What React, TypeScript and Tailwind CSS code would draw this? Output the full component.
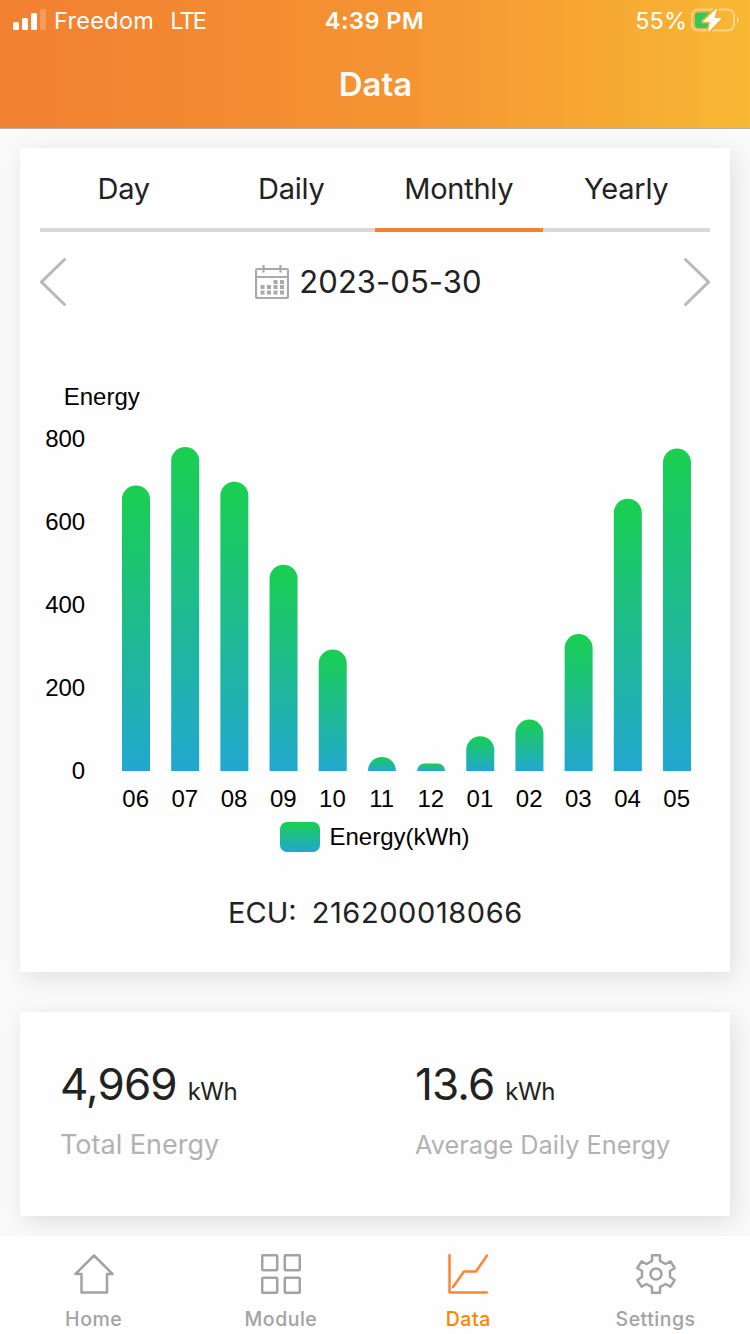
import React, { useState } from 'react';

const TABS = ['Day', 'Daily', 'Monthly', 'Yearly'] as const;

const MONTHS: { label: string; kwh: number }[] = [
  { label: '06', kwh: 688 },
  { label: '07', kwh: 781 },
  { label: '08', kwh: 697 },
  { label: '09', kwh: 497 },
  { label: '10', kwh: 293 },
  { label: '11', kwh: 34 },
  { label: '12', kwh: 18 },
  { label: '01', kwh: 84 },
  { label: '02', kwh: 124 },
  { label: '03', kwh: 330 },
  { label: '04', kwh: 656 },
  { label: '05', kwh: 777 },
];

const TICKS = [800, 600, 400, 200, 0];

const BASE_Y = 411;
const PX_PER_KWH = 0.415;
const BAR_W = 28;
const BAR_STEP = 49.18;

const barPath = (x: number, h: number) => {
  const r = Math.min(BAR_W / 2, h);
  const top = BASE_Y - h;
  return `M${x} ${BASE_Y}V${top + r}a${r} ${r} 0 0 1 ${r} ${-r}h${BAR_W - 2 * r}a${r} ${r} 0 0 1 ${r} ${r}V${BASE_Y}Z`;
};

const StatusBar: React.FC = () => (
  <div className="grid h-10 grid-cols-3 items-center pr-[10px] pl-[13px] text-[23.5px] text-white">
    <div className="flex items-center">
      <svg width="33" height="22" viewBox="0 0 33 22" fill="white" className="-mt-0.5">
        <rect x="0" y="14" width="6" height="8" rx="1.6" />
        <rect x="9" y="10" width="6" height="12" rx="1.6" />
        <rect x="18" y="5" width="6" height="17" rx="1.6" />
        <rect x="27" y="1" width="6" height="21" rx="1.6" opacity="0.22" />
      </svg>
      <span className="mt-0.5 ml-2 tracking-[0.3px]">Freedom</span>
      <span className="mt-0.5 ml-4 tracking-[-1.8px]">LTE</span>
    </div>
    <div className="mt-0.5 pr-1 text-center font-semibold tracking-[0.5px]">4:39 PM</div>
    <div className="flex items-center justify-end">
      <span className="mt-0.5 mr-[4px]">55%</span>
      <svg width="49" height="26" viewBox="0 0 49 26">
        <rect x="1" y="2.5" width="42" height="21" rx="6" fill="none" stroke="white" strokeOpacity="0.42" strokeWidth="2" />
        <path d="M46 10v6c2.6-.6 2.6-5.4 0-6z" fill="white" fillOpacity="0.5" />
        <rect x="4" y="5.5" width="20" height="15.5" rx="3.5" fill="#34c759" />
        <path d="M25.5 2 12.5 14.5h7L17.5 24.5 30 11.5h-7L25.5 2Z" fill="#f7af33" stroke="#f7af33" strokeWidth="4" strokeLinejoin="round" />
        <path d="M25.5 2 12.5 14.5h7L17.5 24.5 30 11.5h-7L25.5 2Z" fill="white" stroke="white" strokeWidth="0.8" strokeLinejoin="round" />
      </svg>
    </div>
  </div>
);

const CalendarIcon: React.FC = () => (
  <svg width="34" height="34" viewBox="0 0 34 34" fill="none" stroke="#a9a9a9" strokeWidth="2.2">
    <rect x="1" y="4" width="32" height="29" rx="1.5" />
    <path d="M1 12h32M8.5 0v7.5M25.5 0v7.5" />
    <path d="M18.5 17h4M25 17h4M5.5 22h4M12 22h4M18.5 22h4M25 22h4M5.5 27.5h4M12 27.5h4M18.5 27.5h4M25 27.5h4" strokeWidth="4" />
  </svg>
);

const EnergyChart: React.FC = () => (
  <svg width="670" height="500" viewBox="0 0 670 500" className="block font-['Liberation_Sans',sans-serif] text-[24px]">
    <defs>
      <linearGradient id="energy" x1="0" y1="0" x2="0" y2="1">
        <stop offset="0" stopColor="#19cf4f" />
        <stop offset="1" stopColor="#22a7d0" />
      </linearGradient>
    </defs>
    <text x="23.7" y="44.5">Energy</text>
    {TICKS.map((t) => (
      <text key={t} x="45.2" y={BASE_Y - t * PX_PER_KWH + 8} textAnchor="end">{t}</text>
    ))}
    {MONTHS.map((m, i) => (
      <g key={m.label}>
        <path d={barPath(82 + i * BAR_STEP, m.kwh * PX_PER_KWH)} fill="url(#energy)" />
        <text x={95.7 + i * BAR_STEP} y="447" textAnchor="middle">{m.label}</text>
      </g>
    ))}
    <rect x="240" y="462" width="40" height="30" rx="7" fill="url(#energy)" />
    <text x="289.5" y="485">Energy(kWh)</text>
  </svg>
);

const Stat: React.FC<{ value: string; label: string; compact?: boolean }> = ({ value, label, compact }) => (
  <div className="w-[355px] shrink-0">
    <div className="flex h-[60px] items-baseline text-[#222]">
      <span className="text-[44px] leading-[60px] tracking-[-0.9px]">{value}</span>
      <span className="ml-[11px] text-[24px] tracking-[-0.5px]">kWh</span>
    </div>
    <div className={`mt-[13px] leading-9 text-[#b3b1b2] ${compact ? 'text-[25.3px]' : 'text-[27px]'}`}>{label}</div>
  </div>
);

const NAV: { label: string; icon: React.ReactNode }[] = [
  { label: 'Home', icon: <path d="M20 1.5 38.5 20H33v18.5H7.5V20H1.5Z" /> },
  {
    label: 'Module',
    icon: (
      <>
        <rect x="1.2" y="1.2" width="15" height="15" rx="1" />
        <rect x="23.8" y="1.2" width="15" height="15" rx="1" />
        <rect x="1.2" y="23.8" width="15" height="15" rx="1" />
        <rect x="23.8" y="23.8" width="15" height="15" rx="1" />
      </>
    ),
  },
  { label: 'Data', icon: <path d="M1.5 1v37.5H39M5 33 16 17.5h12L39 1.5" strokeLinecap="round" /> },
  {
    label: 'Settings',
    icon: (
      <>
        <path d="M16 1.3h8v5.5l5.5 3.2L34.5 7.300 38.700 14 34 17v6l4.700 3-4.200 6.700-5-2.700L24 33.200v5.500h-8v-5.500L10.500 30l-5 2.700L1.300 26 6 23v-6l-4.700-3 4.200-6.700 5 2.700L16 6.800Z" />
        <circle cx="20" cy="20" r="5.5" />
      </>
    ),
  },
];

const App: React.FC = () => {
  const [tab, setTab] = useState<string>('Monthly');
  const [page, setPage] = useState('Data');

  return (
    <div className="flex h-[1334px] w-[750px] flex-col overflow-hidden bg-[#fafafa] font-['Inter',sans-serif]">
      <header className="h-[129px] shrink-0 border-b border-[#b2b2b2] bg-[linear-gradient(90deg,#f28031_0%,#f38a31_30%,#f59532_55%,#f7a833_80%,#f8b833_100%)]">
        <StatusBar />
        <h1 className="mt-[22px] pl-px text-center text-[33px] leading-[44px] font-semibold text-[#fafafa]">Data</h1>
      </header>

      <main className="flex flex-1 flex-col gap-10 px-5 pt-[19px]">
        <section className="h-[824px] bg-[#fefefe] px-5 shadow-[4px_6px_24px_rgba(0,0,0,0.11)]">
          <div className="flex h-[84px]">
            {TABS.map((t) => (
              <button
                key={t}
                onClick={() => setTab(t)}
                className={`flex-1 border-b-4 pt-0.5 text-[29px] tracking-[-0.25px] text-[#222] ${tab === t ? 'border-[#f08232]' : 'border-[#d9d9d9]'}`}
              >
                {t}
              </button>
            ))}
          </div>

          <div className="flex h-[100px] items-center justify-between">
            <svg width="27" height="48" viewBox="0 0 27 48" fill="none" stroke="#b9b9b9" strokeWidth="3" strokeLinecap="round">
              <path d="M24.5 1.5 1.5 24l23 22.5" />
            </svg>
            <div className="flex items-center gap-[10px] pr-[13px]">
              <CalendarIcon />
              <span className="text-[31px] tracking-[0.05px] text-[#222]">2023-05-30</span>
            </div>
            <svg width="27" height="48" viewBox="0 0 27 48" fill="none" stroke="#b9b9b9" strokeWidth="3" strokeLinecap="round">
              <path d="m2.5 1.5 23 22.5-23 22.5" />
            </svg>
          </div>

          <div className="mt-7">
            <EnergyChart />
          </div>

          <div className="mt-[33px] flex justify-center gap-[15px] pl-px text-[29px] leading-10 text-[#222]">
            <span>ECU:</span>
            <span className="tracking-[0.6px]">216200018066</span>
          </div>
        </section>

        <section className="flex h-[204px] bg-[#fefefe] pt-[42px] pl-10 shadow-[4px_6px_24px_rgba(0,0,0,0.11)]">
          <Stat value="4,969" label="Total Energy" />
          <Stat value="13.6" label="Average Daily Energy" compact />
        </section>
      </main>

      <nav className="relative flex h-[98px] shrink-0 bg-[#fefefe]">
        {NAV.map((n) => (
          <button
            key={n.label}
            onClick={() => setPage(n.label)}
            className={`flex w-[187.3px] flex-col items-center pt-[18px] ${page === n.label ? 'text-[#ff8500]' : 'text-[#a3a3a3]'}`}
          >
            <svg width="40" height="40" viewBox="0 0 40 40" fill="none" stroke={page === n.label ? '#fd8532' : '#a3a3a3'} strokeWidth="2.5" strokeLinejoin="round">
              {n.icon}
            </svg>
            <span className="mt-[11px] text-[19.5px] leading-7 font-medium tracking-[0.5px]">{n.label}</span>
          </button>
        ))}
      </nav>
    </div>
  );
};

export default App;
